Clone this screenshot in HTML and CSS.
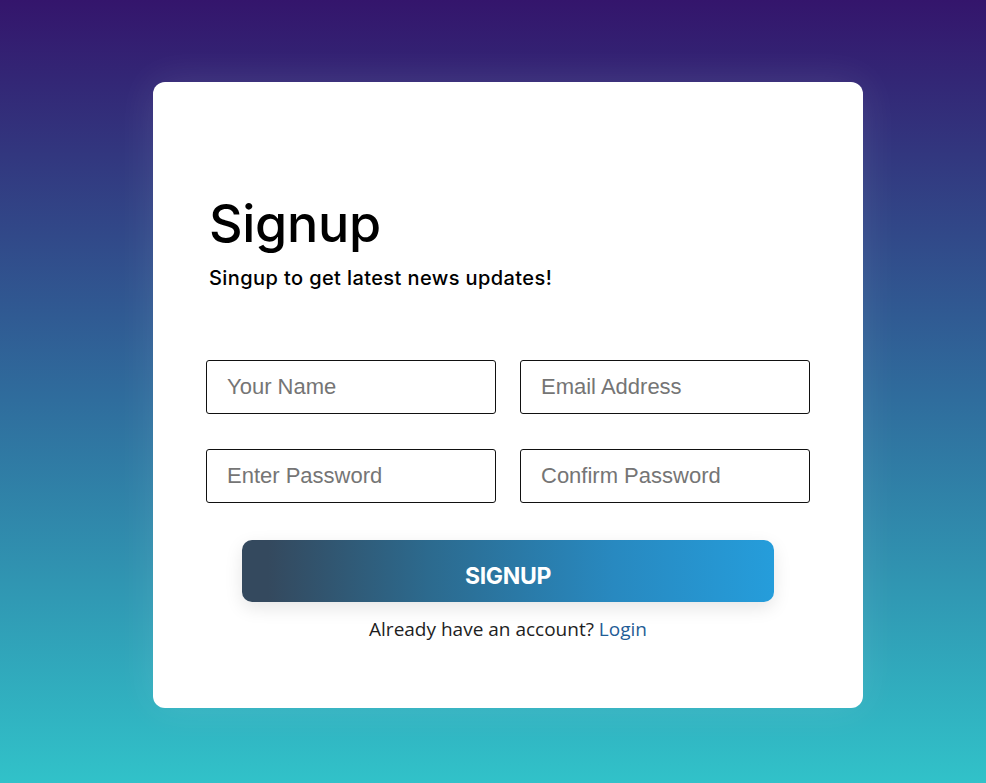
FILE: index.html
```html
<!DOCTYPE html>
<html>
<head>
<meta charset="utf-8">
<link rel="stylesheet" href="styles.css">
</head>
<body>
<div class="card">
  <div class="head">
    <h1 class="title">Signup</h1>
    <p class="subtitle">Singup to get latest news updates!</p>
  </div>
  <form class="form">
    <div class="grid">
      <input class="field" type="text" placeholder="Your Name">
      <input class="field" type="email" placeholder="Email Address">
      <input class="field" type="password" placeholder="Enter Password">
      <input class="field" type="password" placeholder="Confirm Password">
    </div>
    <button class="btn" type="button">SIGNUP</button>
    <p class="foot">Already have an account? <a class="link" href="#">Login</a></p>
  </form>
</div>
</body>
</html>
```
FILE: styles.css
```css
html, body {
  margin: 0;
  padding: 0;
}
body {
  width: 986px;
  height: 783px;
  overflow: hidden;
  background: linear-gradient(to bottom, #34156c 0%, #2f6b9c 50%, #31c2c9 100%);
  font-family: "Inter", "Noto Sans", sans-serif;
}
.card {
  box-sizing: border-box;
  width: 710px;
  height: 626px;
  margin: 82px 0 0 153px;
  background: #fff;
  border-radius: 12px;
  box-shadow: 0 0 40px rgba(255, 255, 255, 0.10);
  padding: 110px 53px 0 53px;
}
.head {
  padding-left: 3px;
}
.title {
  margin: 0;
  font-family: "Inter", sans-serif;
  font-weight: 500;
  font-size: 52px;
  line-height: 64px;
  letter-spacing: -0.3px;
  color: #000;
}
.subtitle {
  margin: 10px 0 0 0;
  font-family: "Inter", sans-serif;
  font-weight: 500;
  font-size: 20px;
  line-height: 24px;
  letter-spacing: 0.4px;
  color: #000;
}
.form {
  margin-top: 70px;
}
.grid {
  display: grid;
  grid-template-columns: 290px 290px;
  column-gap: 24px;
  row-gap: 35px;
}
.field {
  box-sizing: border-box;
  width: 290px;
  height: 54px;
  border: 1px solid #111;
  border-radius: 3px;
  padding: 0 20px;
  font-family: "Liberation Sans", Arial, sans-serif;
  font-size: 22px;
  color: #333;
  outline: none;
  background: #fff;
}
.field::placeholder {
  color: #757575;
}
.btn {
  display: block;
  box-sizing: border-box;
  width: 532px;
  height: 62px;
  margin: 37px auto 0 auto;
  padding: 9px 0 0 0;
  border: none;
  border-radius: 10px;
  background: linear-gradient(to right, #34495e 5%, #2c6a8e 35%, #2889c0 70%, #259ddb 100%);
  box-shadow: 0 6px 18px rgba(0, 0, 0, 0.10);
  color: #fff;
  font-family: "Inter", sans-serif;
  font-weight: 700;
  font-size: 23px;
  letter-spacing: -0.3px;
  cursor: pointer;
}
.foot {
  margin: 15px 0 0 0;
  text-align: center;
  font-family: "Open Sans", "Noto Sans", sans-serif;
  font-size: 19px;
  line-height: 24px;
  color: #1e1e1e;
}
.link {
  color: #1f5d96;
  text-decoration: none;
}
```
